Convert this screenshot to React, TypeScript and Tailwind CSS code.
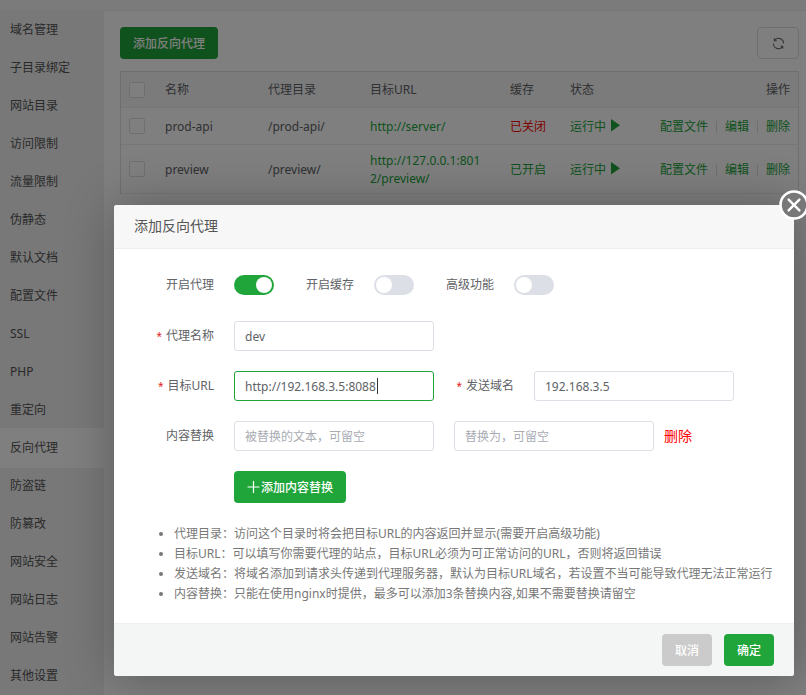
import { useEffect, useRef, useState } from "react";

const MENU = [
  "域名管理", "子目录绑定", "网站目录", "访问限制", "流量限制", "伪静态",
  "默认文档", "配置文件", "SSL", "PHP", "重定向", "反向代理",
  "防盗链", "防篡改", "网站安全", "网站日志", "网站告警", "其他设置",
];

const PROXIES = [
  { name: "prod-api", dir: "/prod-api/", url: "http://server/", cached: false },
  { name: "preview", dir: "/preview/", url: "http://127.0.0.1:8012/preview/", cached: true },
];

const NOTES = [
  "代理目录：访问这个目录时将会把目标URL的内容返回并显示(需要开启高级功能)",
  "目标URL：可以填写你需要代理的站点，目标URL必须为可正常访问的URL，否则将返回错误",
  "发送域名：将域名添加到请求头传递到代理服务器，默认为目标URL域名，若设置不当可能导致代理无法正常运行",
  "内容替换：只能在使用nginx时提供，最多可以添加3条替换内容,如果不需要替换请留空",
];

const INPUT =
  "h-[30px] w-[200px] min-w-0 rounded-[3px] border border-[#dcdfe6] bg-white px-2.5 text-xs text-[#606266] outline-none placeholder:text-[#a8abb2] focus:border-[#20a53a]";
const HEAD = "border-b border-[#ebeef5] px-2 py-1.5";
const CELL = "border-b border-[#ebeef5] px-2 pt-[7px] pb-[5px]";
const BUTTON = "flex h-8 items-center gap-px rounded px-[13px] pt-0.5 font-medium text-white";

function Tick({ label }: { label: string }) {
  return (
    <input
      type="checkbox"
      aria-label={label}
      className="block size-4 appearance-none rounded-[2px] border border-[#dcdfe6] bg-white checked:bg-[#20a53a]"
    />
  );
}

function Label({ id, text, required }: { id: string; text: string; required?: boolean }) {
  return (
    <label htmlFor={id} className="w-[100px] shrink-0 pr-5 text-right">
      {required && <span className="mr-1 text-[10px] text-[#e02020]">*</span>}
      {text}
    </label>
  );
}

function Switch({ id, text, on }: { id: string; text: string; on?: boolean }) {
  return (
    <>
      <Label id={id} text={text} />
      <input
        id={id}
        type="checkbox"
        role="switch"
        defaultChecked={on}
        className="flex h-5 w-10 shrink-0 appearance-none items-center rounded-full bg-[#dcdfe6] px-0.5 before:size-4 before:rounded-full before:bg-white checked:justify-end checked:bg-[#20a53a]"
      />
    </>
  );
}

function Sidebar() {
  return (
    <nav className="w-[104px] shrink-0 bg-[#f0f0f1] pb-0.5">
      {MENU.map((item) => (
        <a
          key={item}
          href="#"
          className={
            item === "反向代理"
              ? "-mb-0.5 flex h-10 items-center bg-white pl-2.5 text-[#555]"
              : "-mb-0.5 flex h-10 items-center pl-2.5 text-[#555]"
          }
        >
          {item}
        </a>
      ))}
    </nav>
  );
}

function ProxyTable() {
  return (
    <div className="mt-3 border border-b-0 border-[#dddee0]">
      <table className="w-full table-fixed border-separate border-spacing-0 text-left leading-[18px]">
        <colgroup>
          <col className="w-9" />
          <col className="w-[103px]" />
          <col className="w-[102px]" />
          <col className="w-[140px]" />
          <col className="w-[60px]" />
          <col className="w-[70px]" />
          <col />
        </colgroup>
        <thead className="bg-[#f6f6f6]">
          <tr className="h-9">
            <th className={HEAD}><Tick label="全选" /></th>
            {["名称", "代理目录", "目标URL", "缓存", "状态"].map((h) => (
              <th key={h} className={`${HEAD} font-normal`}>{h}</th>
            ))}
            <th className={`${HEAD} text-right font-normal`}>操作</th>
          </tr>
        </thead>
        <tbody>
          {PROXIES.map((p) => (
            <tr key={p.name} className="h-[37px]">
              <td className={HEAD}><Tick label={p.name} /></td>
              <td className={CELL}>{p.name}</td>
              <td className={CELL}>{p.dir}</td>
              <td className="border-b border-[#ebeef5] pt-[7px] pr-5 pb-[5px] pl-2">
                <a href="#" className="break-all text-[#20a53a]">{p.url}</a>
              </td>
              <td className={CELL}>
                <span className={p.cached ? "text-[#20a53a]" : "text-[#f00]"}>
                  {p.cached ? "已开启" : "已关闭"}
                </span>
              </td>
              <td className={CELL}>
                <a href="#" className="flex items-start gap-[5px] text-[#20a53a]">
                  运行中
                  <svg width="9" height="14" viewBox="0 0 9 14" fill="currentColor" className="shrink-0">
                    <path d="M0 1 L9 7.3 L0 13.6 Z" />
                  </svg>
                </a>
              </td>
              <td className={CELL}>
                <div className="flex items-center justify-end gap-2 text-[#20a53a]">
                  <a href="#">配置文件</a>
                  <span className="h-3 w-px bg-[#dcdfe6]" />
                  <a href="#">编辑</a>
                  <span className="h-3 w-px bg-[#dcdfe6]" />
                  <a href="#">删除</a>
                </div>
              </td>
            </tr>
          ))}
        </tbody>
      </table>
    </div>
  );
}

function ProxyDialog() {
  const urlRef = useRef<HTMLInputElement>(null);
  const [url, setUrl] = useState("http://192.168.3.5:8088");

  useEffect(() => {
    const el = urlRef.current;
    if (el) {
      el.focus();
      el.setSelectionRange(el.value.length, el.value.length);
    }
  }, []);

  return (
    <section
      role="dialog"
      aria-labelledby="dialog-title"
      className="relative w-full max-w-[680px] rounded-[3px] bg-white shadow-[1px_1px_50px_rgba(0,0,0,0.3)]"
    >
      <h2
        id="dialog-title"
        className="flex h-11 items-center rounded-t-[3px] border-b border-[#eee] bg-[#f7f7f7] px-5 pb-0.5 text-sm text-[#555]"
      >
        添加反向代理
      </h2>
      <button type="button" aria-label="关闭" className="absolute -top-[15px] -right-[15px]">
        <svg width="30" height="30" viewBox="0 0 30 30" fill="none" stroke="#fff" className="block">
          <circle cx="15" cy="15" r="13.5" fill="#787878" strokeWidth="2.6" />
          <path d="M9.6 9.6 L20.4 20.4 M20.4 9.6 L9.6 20.4" strokeWidth="2.4" strokeLinecap="round" />
        </svg>
      </button>

      <form className="flex flex-col gap-5 pt-5 pb-[19px] pl-5">
        <div className="flex h-8 items-center">
          <Switch id="enable" text="开启代理" on />
          <Switch id="cache" text="开启缓存" />
          <Switch id="advanced" text="高级功能" />
        </div>
        <div className="flex items-center">
          <Label id="name" text="代理名称" required />
          <input id="name" defaultValue="dev" className={INPUT} />
        </div>
        <div className="flex items-center">
          <Label id="url" text="目标URL" required />
          <div className="relative flex">
            <input
              id="url"
              ref={urlRef}
              value={url}
              onChange={(e) => setUrl(e.target.value)}
              className={`${INPUT} peer caret-transparent`}
            />
            <span className="absolute top-[7px] left-[143px] hidden h-4 w-px bg-[#333] peer-focus:block" />
          </div>
          <Label id="host" text="发送域名" required />
          <input id="host" defaultValue="192.168.3.5" className={INPUT} />
        </div>
        <div className="flex items-center">
          <Label id="from" text="内容替换" />
          <input id="from" placeholder="被替换的文本，可留空" className={INPUT} />
          <input aria-label="替换为" placeholder="替换为，可留空" className={`${INPUT} ml-5`} />
          <button type="button" className="ml-2.5 text-sm text-[#f00]">删除</button>
        </div>
        <div className="flex pl-[100px]">
          <button type="button" className={`${BUTTON} bg-[#20a53a]`}>
            <svg width="13" height="14" viewBox="0 0 13 14" stroke="currentColor" strokeWidth="1.2">
              <path d="M6.5 0 V12 M0.5 6 H12.5" />
            </svg>
            添加内容替换
          </button>
        </div>
        <ul className="list-disc pt-px pl-10 leading-5 text-[#777]">
          {NOTES.map((n) => (
            <li key={n}>{n}</li>
          ))}
        </ul>
      </form>

      <footer className="flex justify-end gap-3 rounded-b-[3px] border-t border-[#edf1f2] bg-[#f4f6f6] px-5 py-2.5">
        <button type="button" className={`${BUTTON} bg-[#cbcbcb]`}>取消</button>
        <button type="button" className={`${BUTTON} bg-[#20a53a]`}>确定</button>
      </footer>
    </section>
  );
}

export default function App() {
  return (
    <div className="relative flex h-screen flex-col overflow-hidden bg-white font-['Noto_Sans','Noto_Sans_CJK_SC',sans-serif] text-xs text-[#606266]">
      <div className="h-2.5 shrink-0 bg-[#f7f7f7]" />
      <div className="flex">
        <Sidebar />
        <main className="min-w-0 flex-1 border-t border-[#eee] pt-4 pr-[7px] pl-4">
          <div className="flex items-center justify-between">
            <button type="button" className={`${BUTTON} bg-[#20a53a]`}>添加反向代理</button>
            <button
              type="button"
              aria-label="刷新"
              className="flex h-8 w-[42px] items-center justify-center rounded border border-[#dcdfe6]"
            >
              <svg width="15" height="15" viewBox="0 0 1024 1024" fill="currentColor">
                <path d="M771.776 794.88A384 384 0 0 1 128 512h64a320 320 0 0 0 555.712 216.448H654.72a32 32 0 1 1 0-64h149.056a32 32 0 0 1 32 32v148.928a32 32 0 1 1-64 0v-50.56zM276.288 295.616h92.992a32 32 0 0 1 0 64H220.16a32 32 0 0 1-32-32V178.56a32 32 0 0 1 64 0v50.56A384 384 0 0 1 896.128 512h-64a320 320 0 0 0-555.776-216.384z" />
              </svg>
            </button>
          </div>
          <ProxyTable />
        </main>
      </div>
      <div className="absolute inset-0 flex items-start justify-end bg-black/50 pt-[205px] pr-3 pl-4">
        <ProxyDialog />
      </div>
    </div>
  );
}
